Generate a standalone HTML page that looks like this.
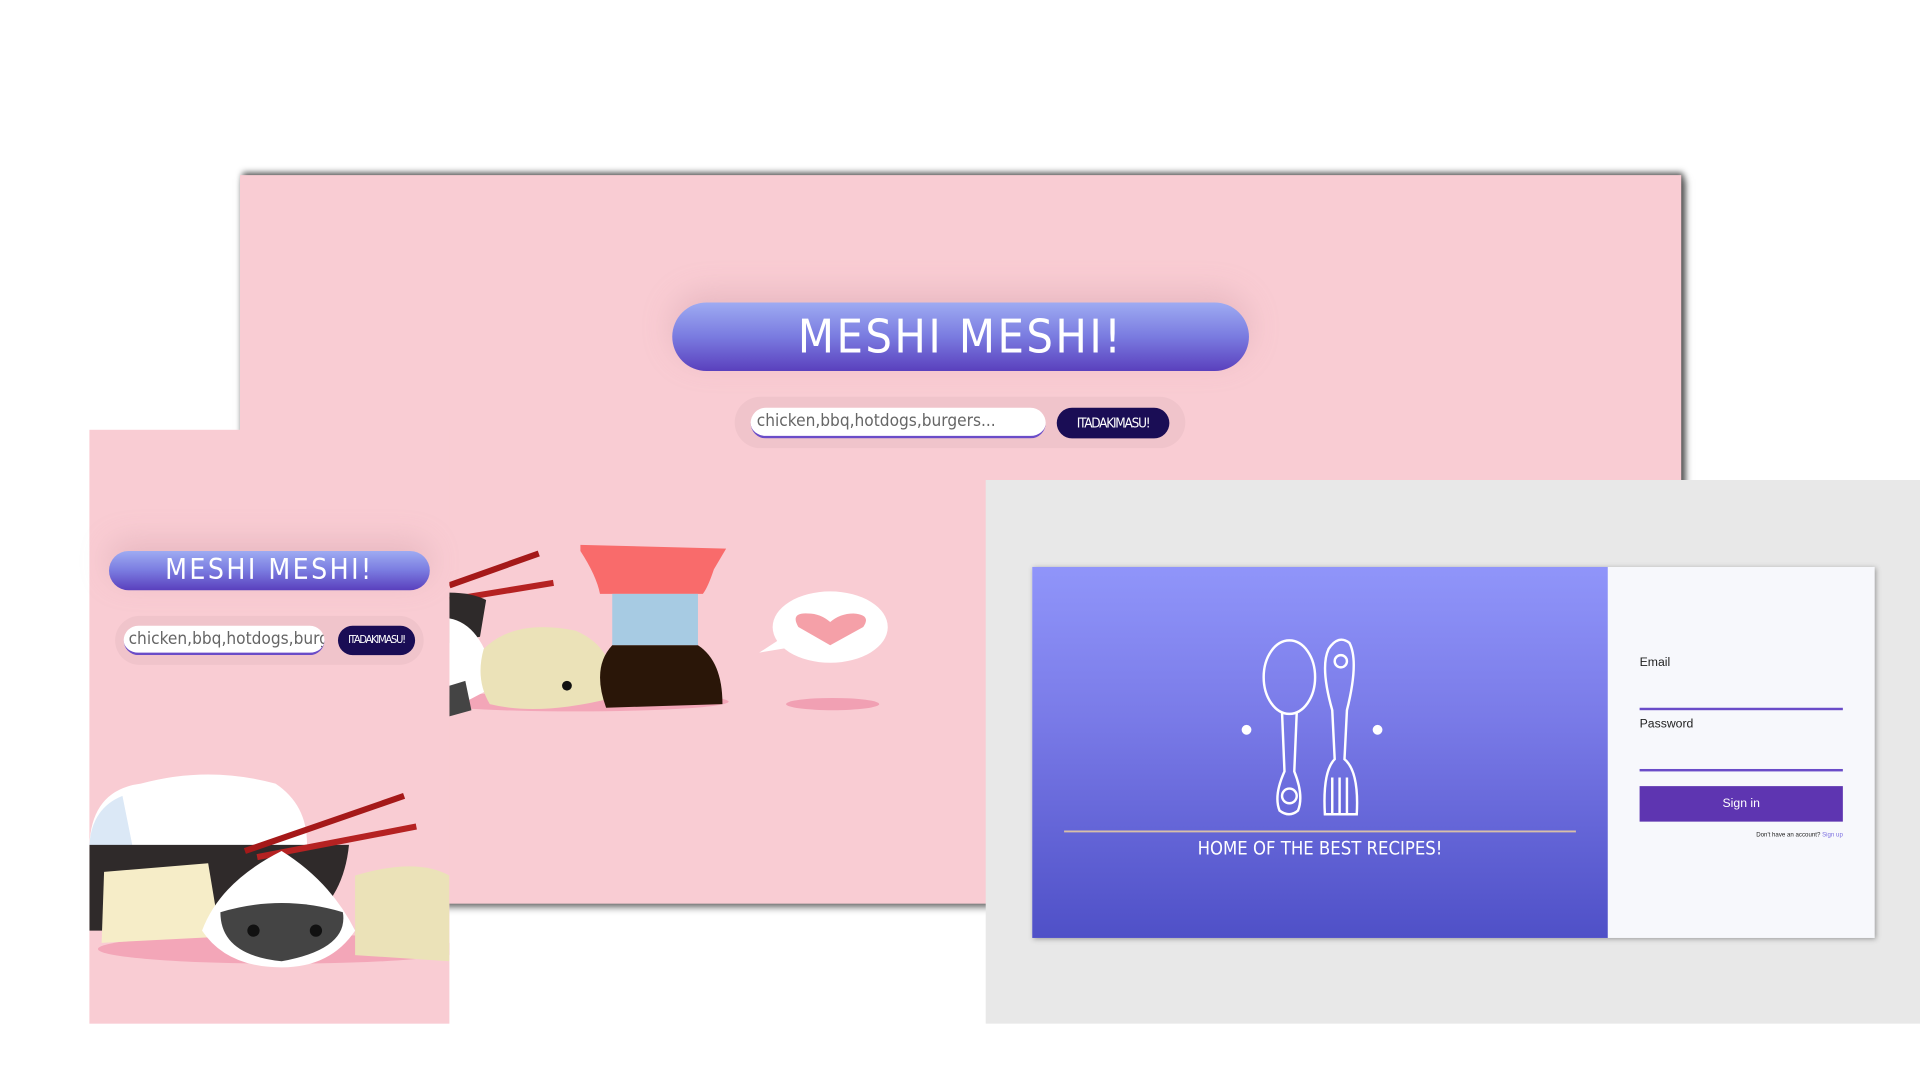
<!DOCTYPE html>
<html><head><meta charset="utf-8"><style>
html,body{margin:0;padding:0;width:1920px;height:1080px;overflow:hidden;background:#fff}
#w{position:absolute;left:0;top:0;width:1568px;height:882px;transform:scale(1.22449);transform-origin:0 0;font-family:"Liberation Sans",sans-serif}
.a{position:absolute}
.pill{background:linear-gradient(#9eabf2,#7a7be0 50%,#5a40bd);color:#fff;text-align:center;font-family:"DejaVu Sans Condensed","DejaVu Sans",sans-serif;letter-spacing:2px;box-shadow:0 -8px 24px rgba(200,150,160,.35)}
.inp{background:#fff;border-radius:14px;border-bottom:2px solid #6a4cc8;color:#666;box-sizing:border-box;white-space:nowrap;overflow:hidden;font-family:"DejaVu Sans Condensed",sans-serif}
.btn{background:#1a0d55;color:#fff;border-radius:14px;text-align:center;font-family:"DejaVu Sans Condensed",sans-serif;white-space:nowrap;overflow:hidden}
</style></head><body><div id="w">
<div class="a" style="left:196px;top:143px;width:1177px;height:595px;background:#f9ccd3;box-shadow:2px -2px 5px #555,3px 3px 6px #666"></div>
<div class="a pill" style="left:549px;top:247px;width:471px;height:56px;border-radius:28px;font-size:38px;line-height:56px">MESHI MESHI!</div>
<div class="a" style="left:600px;top:324px;width:368px;height:42px;border-radius:21px;background:#f0c4cb"></div>
<div class="a inp" style="left:613px;top:333px;width:241px;height:25px;font-size:14px;line-height:23px;padding-left:5px">chicken,bbq,hotdogs,burgers...</div>
<div class="a btn" style="left:863px;top:333px;width:92px;height:25px;font-size:11px;line-height:25px;letter-spacing:-1px">ITADAKIMASU!</div>
<svg class="a" style="left:0;top:0" width="1568" height="882" viewBox="0 0 1568 882">
<ellipse cx="470" cy="573" rx="125" ry="8" fill="#f3a6b8"/>
<line x1="367" y1="478" x2="440" y2="452" stroke="#a51919" stroke-width="5"/>
<line x1="367" y1="490" x2="452" y2="476" stroke="#b52222" stroke-width="5"/>
<path d="M367 484 Q385 484 397 490 L392 520 L367 525Z" fill="#2e2a2a"/>
<path d="M367 505 Q395 510 405 560 L367 580Z" fill="#fff"/>
<path d="M367 560 L380 556 L385 580 L367 585Z" fill="#444"/>
<path d="M395 530 Q420 505 470 515 Q505 530 500 570 Q440 585 400 575 Q388 555 395 530Z" fill="#ebe2b8"/>
<circle cx="463" cy="560" r="4" fill="#111"/>
<path d="M474 445 L593 448 L583 465 Q578 480 574 485 L490 485 Q487 470 474 450Z" fill="#f96b6b"/>
<rect x="500" y="485" width="70" height="42" fill="#a7cbe3"/>
<path d="M500 527 L570 527 Q590 540 590 575 L495 578 Q483 545 500 527Z" fill="#2a1608"/>
<circle cx="678" cy="512" r="47" fill="#fff" transform="scale(1,0.62) translate(0,314)"/>
<path d="M640 520 L620 533 L650 528Z" fill="#fff"/>
<path d="M678 527 L652 512 Q645 500 660 501 Q670 501 678 508 Q686 501 697 501 Q712 502 705 512Z" fill="#f5a0a8"/>
<ellipse cx="680" cy="575" rx="38" ry="5" fill="#f1a0b3"/>
</svg>
<div class="a" style="left:73px;top:351px;width:294px;height:485px;background:#f9ccd3;overflow:hidden">
<svg width="294" height="485" viewBox="73 351 294 485" style="position:absolute;left:0;top:0">
<ellipse cx="230" cy="775" rx="150" ry="12" fill="#f3a6b8"/>
<path d="M73 690 Q75 645 115 640 Q170 625 225 640 Q255 660 250 700 L73 700Z" fill="#fff"/>
<path d="M73 690 Q75 660 100 650 L110 700 L73 700Z" fill="#dbe8f6"/>
<path d="M73 690 L285 690 Q280 740 240 760 L73 760Z" fill="#2f2a2a"/>
<line x1="200" y1="695" x2="330" y2="650" stroke="#a51919" stroke-width="5"/>
<line x1="210" y1="700" x2="340" y2="675" stroke="#b52222" stroke-width="5"/>
<path d="M85 712 L170 705 L180 765 L83 770Z" fill="#f6edc8"/>
<path d="M290 715 Q340 700 367 715 L367 785 L290 780Z" fill="#ebe2b8"/>
<path d="M230 695 Q270 720 290 760 Q270 790 230 790 Q185 790 165 760 Q180 720 230 695Z" fill="#fff"/>
<path d="M180 745 Q230 730 280 745 Q285 775 230 785 Q180 780 180 745Z" fill="#444"/>
<circle cx="207" cy="760" r="5" fill="#111"/><circle cx="258" cy="760" r="5" fill="#111"/>
</svg>
</div>
<div class="a pill" style="left:89px;top:450px;width:262px;height:32px;border-radius:16px;font-size:23px;line-height:32px">MESHI MESHI!</div>
<div class="a" style="left:94px;top:503px;width:252px;height:40px;border-radius:20px;background:#f0c4cb"></div>
<div class="a inp" style="left:101px;top:511px;width:164px;height:24px;font-size:14px;line-height:22px;padding-left:4px">chicken,bbq,hotdogs,burgers</div>
<div class="a btn" style="left:276px;top:511px;width:63px;height:24px;font-size:9px;line-height:24px;letter-spacing:-1px">ITADAKIMASU!</div>
<div class="a" style="left:805px;top:392px;width:763px;height:444px;background:#e8e8e8"></div>
<div class="a" style="left:843px;top:463px;width:688px;height:303px;background:#f7f8fc;box-shadow:1px 1px 4px #999"></div>
<div class="a" style="left:843px;top:463px;width:470px;height:303px;background:linear-gradient(#9095fa,#7a7be8 40%,#4f50c7)"></div>
<svg class="a" style="left:0;top:0" width="1568" height="882" viewBox="0 0 1568 882" fill="none" stroke="#fff" stroke-width="2">
<ellipse cx="1053" cy="553" rx="21" ry="30"/>
<path d="M1047 582 L1049 630 Q1040 650 1045 662 Q1053 668 1060 662 Q1065 650 1057 630 L1059 582"/>
<circle cx="1053" cy="650" r="6"/>
<path d="M1085 530 Q1093 518 1102 525 Q1110 540 1100 580 L1098 620 Q1110 630 1108 665 L1082 665 Q1080 630 1090 620 L1088 580 Q1078 545 1085 530Z"/>
<circle cx="1095" cy="540" r="5"/>
<path d="M1088 635 L1088 665 M1094 635 L1094 665 M1100 635 L1100 665"/>
<circle cx="1018" cy="596" r="3" fill="#fff"/><circle cx="1125" cy="596" r="3" fill="#fff"/>
<line x1="869" y1="679" x2="1287" y2="679" stroke="#d8bfa8" stroke-width="1.5"/>
</svg>
<div class="a" style="left:843px;top:684px;width:470px;text-align:center;color:#fff;font-family:'DejaVu Sans Condensed',sans-serif;font-size:15px">HOME OF THE BEST RECIPES!</div>
<div class="a" style="left:1339px;top:536px;font-size:10px;color:#222">Email</div>
<div class="a" style="left:1339px;top:578px;width:166px;height:1.5px;background:#6a4cc8"></div>
<div class="a" style="left:1339px;top:586px;font-size:10px;color:#222">Password</div>
<div class="a" style="left:1339px;top:628px;width:166px;height:1.5px;background:#6a4cc8"></div>
<div class="a" style="left:1339px;top:642px;width:166px;height:29px;background:#5e35b1;color:#fff;font-size:10px;line-height:29px;text-align:center">Sign in</div>
<div class="a" style="left:1339px;top:679px;width:166px;text-align:right;font-size:5px;color:#222">Don't have an account? <span style="color:#7b6ee0">Sign up</span></div>
</div></body></html>
